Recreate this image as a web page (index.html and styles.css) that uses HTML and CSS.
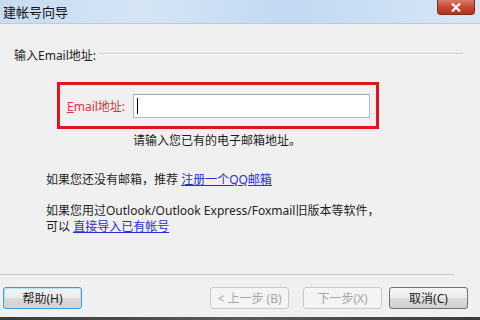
FILE: index.html
```html
<!DOCTYPE html>
<html lang="zh-CN">
<head>
    <meta charset="UTF-8">
    <title>新建帐号向导</title>
    <link rel="stylesheet" href="styles.css">
</head>
<body>
    <div class="window">
        <div class="titlebar">
            <span class="title">建帐号向导</span>
            <div class="closeBtn">
                <svg width="10" height="9" viewBox="0 0 10 9">
                    <path d="M1 0.5 L9 8.5 M9 0.5 L1 8.5" stroke="#ffffff" stroke-width="2.2" fill="none"/>
                </svg>
            </div>
        </div>

        <div class="content">
            <div class="groupTitle">
                <span>输入Email地址:</span>
                <div class="groupLine"></div>
            </div>

            <div class="emailBox">
                <label class="emailLabel"><u>E</u>mail地址:</label>
                <div class="emailInput"><span class="caret"></span></div>
            </div>
            <div class="hint">请输入您已有的电子邮箱地址。</div>

            <p class="tip">如果您还没有邮箱，推荐 <a href="#">注册一个QQ邮箱</a></p>
            <p class="tip second">如果您用过Outlook/Outlook Express/Foxmail旧版本等软件，<br>可以 <a href="#">直接导入已有帐号</a></p>
        </div>

        <div class="footer">
            <div class="footerLine"></div>
            <div class="buttons">
                <button class="btn help">帮助(H)</button>
                <div class="spacer"></div>
                <button class="btn disabled">&lt; 上一步 (B)</button>
                <button class="btn disabled next">下一步(X)</button>
                <button class="btn cancel">取消(C)</button>
            </div>
        </div>
        <div class="bottomEdge"></div>
    </div>
</body>
</html>
```

FILE: styles.css
```css
* {
    margin: 0;
    padding: 0;
    box-sizing: border-box;
}

body {
    width: 480px;
    height: 320px;
    overflow: hidden;
    background-color: #f0f0f0;
    color: #1e1e1e;
    font-family: "Noto Sans", "Noto Sans CJK SC", sans-serif;
    font-size: 12px;
}

.window {
    display: flex;
    flex-direction: column;
    height: 320px;
}

/* Title bar */
.titlebar {
    position: relative;
    height: 24px;
    background: linear-gradient(90deg, #c7dcf2 0%, #d4e4f5 30%, #c2d9f1 60%, #d6e6f6 100%);
    border-bottom: 1px solid #b8cde3;
    display: flex;
    align-items: center;
}

.title {
    margin-left: 3px;
    font-size: 13px;
    color: #111;
}

.closeBtn {
    position: absolute;
    right: 5px;
    top: 0;
    width: 38px;
    height: 15px;
    border: 1px solid #7e2a1c;
    border-top: none;
    border-radius: 0 0 4px 4px;
    background: linear-gradient(#d97a66, #c74a33 50%, #b4321c);
    display: flex;
    align-items: center;
    justify-content: center;
}

/* Content */
.content {
    display: flex;
    flex-direction: column;
}

.groupTitle {
    margin-top: 25px;
    padding-left: 14px;
    padding-right: 17px;
    display: flex;
    align-items: center;
    height: 14px;
    line-height: 14px;
}

.groupLine {
    flex: 1;
    margin-left: 3px;
    margin-top: -4px;
    border-top: 1px solid #c8c8c8;
    border-bottom: 1px solid #ffffff;
}

.emailBox {
    margin-top: 19px;
    margin-left: 57px;
    width: 322px;
    height: 47px;
    border: 3px solid #e0141e;
    display: flex;
    align-items: center;
    padding-left: 7px;
}

.emailLabel {
    color: #d8343a;
    width: 66px;
}

.emailInput {
    width: 237px;
    height: 24px;
    background: white;
    border: 1px solid #abb9c8;
    border-top-color: #9aa8b8;
    padding: 3px 3px;
}

.caret {
    display: block;
    width: 1px;
    height: 16px;
    background: #000;
}

.hint {
    margin-top: 4px;
    margin-left: 133px;
    line-height: 16px;
}

.tip {
    margin-top: 23px;
    margin-left: 46px;
    line-height: 16px;
}

.tip.second {
    margin-top: 15px;
}

.tip a {
    color: #2530d0;
}

/* Footer */
.footer {
    margin-top: 39px;
}

.footerLine {
    width: 454px;
    border-top: 1px solid #c8c8c8;
}

.buttons {
    margin-top: 12px;
    padding: 0 12px 0 3px;
    display: flex;
}

.spacer {
    flex: 1;
}

.btn {
    width: 79px;
    height: 22px;
    font-family: "Noto Sans", "Noto Sans CJK SC", sans-serif;
    font-size: 12px;
    color: #1e1e1e;
    border: 1px solid #707070;
    border-radius: 3px;
    background: linear-gradient(#f4f4f4, #ebebeb 50%, #dcdcdc 51%, #d0d0d0);
}

.btn.help {
    border-color: #3c9bd6;
    box-shadow: inset 0 0 0 1px #b8e0f6;
}

.btn.disabled {
    color: #a6a6a6;
    border-color: #c9c9c9;
    background: #f4f4f4;
}

.btn.next {
    margin-left: 14px;
}

.btn.cancel {
    margin-left: 7px;
}

.bottomEdge {
    margin-top: auto;
    height: 3px;
    background: linear-gradient(90deg, #3a3a3a, #5a5a5a 50%, #3a3a3a);
}
```
